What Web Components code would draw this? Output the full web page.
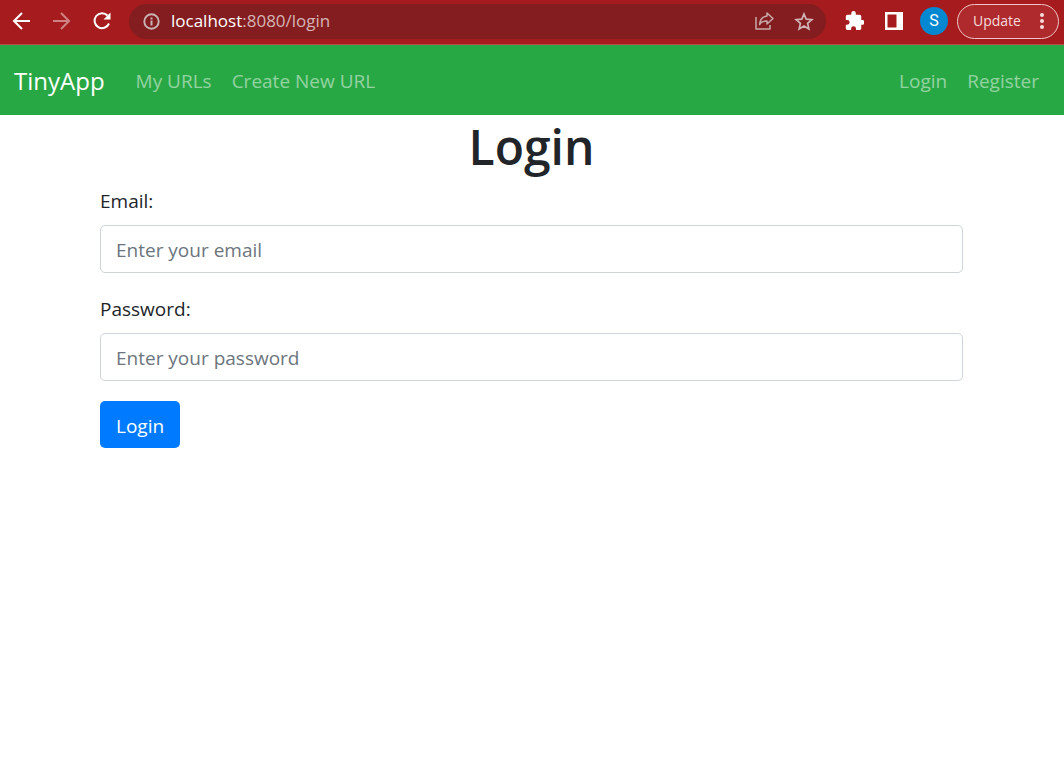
<!DOCTYPE html>
<html lang="en">
<head>
<meta charset="utf-8">
<title>TinyApp</title>
<style>
  body { margin: 0; background: #fff; color: #212529; font: 19px/30px "Open Sans", "Noto Sans", sans-serif; }
</style>
</head>
<body>
<browser-bar>
  <span slot="host">localhost</span><span slot="path">:8080/login</span>
</browser-bar>
<site-nav></site-nav>
<login-page>
  <form-field label="Email:" type="email" placeholder="Enter your email"></form-field>
  <form-field label="Password:" type="password" placeholder="Enter your password"></form-field>
  <primary-button>Login</primary-button>
</login-page>

<script>
class BaseElement extends HTMLElement {
  constructor() {
    super();
    this.attachShadow({ mode: 'open' }).innerHTML =
      '<style>*{box-sizing:border-box}:host{display:block;box-sizing:border-box}button{font:inherit;color:inherit;border:0;background:none;padding:0}a{text-decoration:none}svg{display:block}</style>' + this.template();
  }
}

customElements.define('browser-bar', class extends BaseElement {
  template() {
    return `<style>
      :host { background: #a61c1e; border-bottom: 1px solid #bb4c4c; color: #fff; }
      .row { display: flex; align-items: center; height: 44px; padding: 0 5px 2px 12px; }
      .nav { display: flex; gap: 20px; margin-right: 17px; }
      .dim { opacity: .45; }
      .omni { flex: 1; display: flex; align-items: center; height: 35px; padding: 0 12px; border-radius: 18px; background: #841d1f; color: #d5b4b5; }
      .url { flex: 1; display: flex; margin-left: 10px; font: 17px/24px "Open Sans", "Noto Sans", sans-serif; }
      .host { color: #fff; }
      .tools { display: flex; gap: 20px; }
      .actions { display: flex; align-items: center; gap: 20px; margin: 0 9px 0 18px; }
      .avatar { display: flex; align-items: center; justify-content: center; width: 28px; height: 28px; margin-left: -4px; border-radius: 50%; background: #0288d1; font: 16px/28px Roboto, sans-serif; }
      .update { display: flex; align-items: center; justify-content: space-between; width: 102px; height: 35px; padding: 0 14px 0 15px; border: 1px solid #f0c5c5; border-radius: 18px; background: #ae2a2d; color: #f7dcdc; font: 14px/20px "Open Sans", "Noto Sans", sans-serif; }
    </style>
    <div class="row">
      <div class="nav">
        <button aria-label="Back"><svg width="20" height="20" viewBox="0 0 20 20" fill="none" stroke="#fff" stroke-width="2"><path d="M18 10H3M10 2L2 10l8 8"/></svg></button>
        <button class="dim" aria-label="Forward"><svg width="20" height="20" viewBox="0 0 20 20" fill="none" stroke="#fff" stroke-width="2"><path d="M1 10h15M9 2l8 8-8 8"/></svg></button>
        <button aria-label="Reload"><svg width="20" height="20" viewBox="0 0 20 20"><path d="M15.500 4.500A7.500 7.500 0 1 0 17 12.500" fill="none" stroke="#fff" stroke-width="2"/><path d="M18.500 1.500v7H11.500z" fill="#fff"/></svg></button>
      </div>
      <div class="omni">
        <svg width="20" height="20" viewBox="0 0 20 20"><circle cx="10.500" cy="10.500" r="7.200" fill="none" stroke="#c8b5b5" stroke-width="1.900"/><path d="M9.500 9.500h2v5h-2zM9.500 6.500h2v2h-2z" fill="#c8b5b5"/></svg>
        <div class="url"><span class="host"><slot name="host"></slot></span><slot name="path"></slot></div>
        <div class="tools">
          <button aria-label="Share"><svg width="20" height="20" viewBox="0 0 20 20" fill="none" stroke="#c8a9aa" stroke-width="1.500" stroke-linejoin="round"><path d="M2 6v12h14v-4M13 2l6 5.500L13 13V10c-4 0-6 1-7.500 3.500C6 9 8.500 5.500 13 5z"/></svg></button>
          <button aria-label="Bookmark"><svg width="20" height="20" viewBox="0 0 20 20" fill="none" stroke="#d0b4b5" stroke-width="1.700"><path d="M10 3l2.200 5.200 5.700.5-4.300 3.700 1.300 5.500-4.900-2.900-4.900 2.900 1.300-5.500L2.100 8.700l5.700-.5z"/></svg></button>
        </div>
      </div>
      <div class="actions">
        <button aria-label="Extensions"><svg width="20" height="20" viewBox="0 1 22 22" fill="#fff"><path d="M20.500 11H19V7c0-1.100-.9-2-2-2h-4V3.500a2.500 2.500 0 0 0-5 0V5H4c-1.100 0-2 .9-2 2v3.800h1.500a2.700 2.700 0 0 1 0 5.400H2V20c0 1.100.9 2 2 2h3.800v-1.500a2.700 2.700 0 0 1 5.400 0V22H17c1.100 0 2-.9 2-2v-4h1.500a2.500 2.500 0 0 0 0-5z"/></svg></button>
        <button aria-label="Side panel"><svg width="20" height="20" viewBox="0 0 20 20"><path fill="#fff" fill-rule="evenodd" d="M1 1h18v18H1zM3.500 3.500v13h9v-13z"/></svg></button>
        <button class="avatar" aria-label="Profile S">S</button>
      </div>
      <button class="update"><span>Update</span><svg width="4" height="18" viewBox="0 0 4 18" fill="#f7dcdc"><circle cx="2" cy="3" r="2"/><circle cx="2" cy="9" r="2"/><circle cx="2" cy="15" r="2"/></svg></button>
    </div>`;
  }
});

customElements.define('site-nav', class extends BaseElement {
  template() {
    return `<style>
      nav { display: flex; align-items: center; min-height: 70px; padding: 2px 25px 0 14px; gap: 20px; background: #28a745; }
      a { color: rgba(255,255,255,.5); white-space: nowrap; }
      .brand { margin-right: 11px; color: #fff; font-size: 24px; }
      .end { margin-left: auto; }
    </style>
    <nav><a class="brand" href="#">TinyApp</a><a href="#urls">My URLs</a><a href="#new">Create New URL</a><a class="end" href="#login">Login</a><a href="#register">Register</a></nav>`;
  }
});

customElements.define('login-page', class extends BaseElement {
  template() {
    return `<style>
      :host { padding: 0 101px 0 100px; }
      h1 { margin: 0 0 10px; font-size: 48px; line-height: 60px; font-weight: 600; text-align: center; padding-top: 2px; height: 60px; }
      form { display: flex; flex-direction: column; align-items: stretch; gap: 20px; }
    </style>
    <main><h1>Login</h1><form><slot></slot></form></main>`;
  }
});

customElements.define('form-field', class extends BaseElement {
  template() {
    return `<style>
      label { display: block; padding-top: 1px; margin-bottom: 9px; }
      input { display: block; width: 100%; height: 48px; padding: 2px 15px 0; border: 1px solid #ced4da; border-radius: 5px; background: #fff; color: #495057; font: inherit; }
      input::placeholder { color: #6c757d; opacity: 1; }
    </style>
    <label for="field"></label><input id="field">`;
  }
  connectedCallback() {
    this.shadowRoot.querySelector('label').textContent = this.getAttribute('label');
    const input = this.shadowRoot.querySelector('input');
    input.type = this.getAttribute('type');
    input.placeholder = this.getAttribute('placeholder');
  }
});

customElements.define('primary-button', class extends BaseElement {
  template() {
    return `<style>
      button { display: block; height: 47px; padding: 2px 16px 0; border-radius: 5px; background: #007bff; color: #fff; }
    </style>
    <button type="submit"><slot></slot></button>`;
  }
});
</script>
</body>
</html>
